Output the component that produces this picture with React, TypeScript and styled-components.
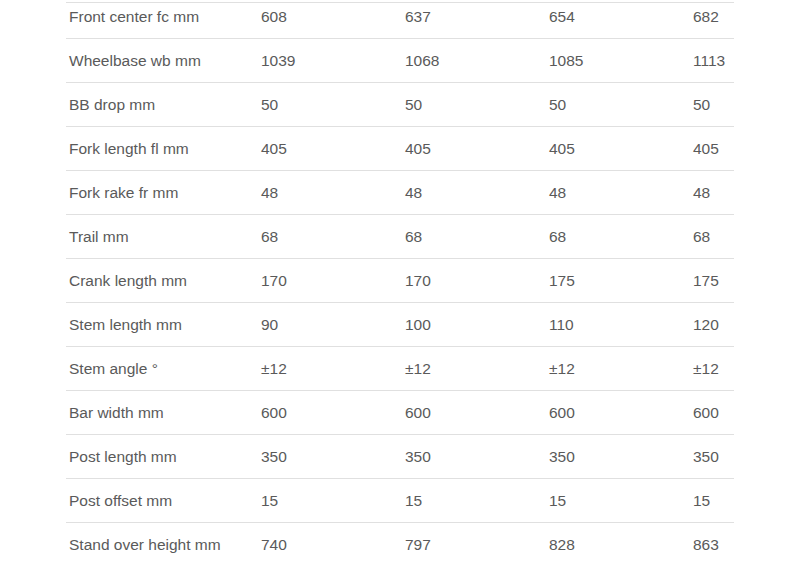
import React from "react";
import styled, { createGlobalStyle } from "styled-components";

const Global = createGlobalStyle`
  html, body { margin: 0; padding: 0; background: #ffffff; }
  body { font-family: "Liberation Sans", Arial, Helvetica, sans-serif; }
`;

const Page = styled.div`
  width: 800px;
  height: 568px;
  overflow: hidden;
  padding: 2px 0 0 66px;
  box-sizing: border-box;
`;

const Table = styled.div`
  width: 668px;
  border-top: 1px solid #e0e0e0;
  display: flex;
  flex-direction: column;
`;

const Row = styled.div<{ $first?: boolean; $last?: boolean }>`
  display: grid;
  grid-template-columns: 192px 144px 144px 144px 1fr;
  box-sizing: content-box;
  padding-top: ${(p) => (p.$first ? "5px" : "13px")};
  height: ${(p) => (p.$first ? "30px" : "30px")};
  border-bottom: ${(p) => (p.$last ? "none" : "1px solid #e0e0e0")};
`;

const Cell = styled.div`
  padding-left: 3px;
  font-size: 15.5px;
  line-height: 17px;
  color: #5a5a5a;
  white-space: nowrap;
`;

const rows: [string, string, string, string, string][] = [
  ["Front center fc mm", "608", "637", "654", "682"],
  ["Wheelbase wb mm", "1039", "1068", "1085", "1113"],
  ["BB drop mm", "50", "50", "50", "50"],
  ["Fork length fl mm", "405", "405", "405", "405"],
  ["Fork rake fr mm", "48", "48", "48", "48"],
  ["Trail mm", "68", "68", "68", "68"],
  ["Crank length mm", "170", "170", "175", "175"],
  ["Stem length mm", "90", "100", "110", "120"],
  ["Stem angle °", "±12", "±12", "±12", "±12"],
  ["Bar width mm", "600", "600", "600", "600"],
  ["Post length mm", "350", "350", "350", "350"],
  ["Post offset mm", "15", "15", "15", "15"],
  ["Stand over height mm", "740", "797", "828", "863"],
];

export default function App() {
  return (
    <>
      <Global />
      <Page>
        <Table>
          {rows.map((r, i) => (
            <Row key={r[0]} $first={i === 0} $last={i === rows.length - 1}>
              {r.map((c, j) => (
                <Cell key={j}>{c}</Cell>
              ))}
            </Row>
          ))}
        </Table>
      </Page>
    </>
  );
}
